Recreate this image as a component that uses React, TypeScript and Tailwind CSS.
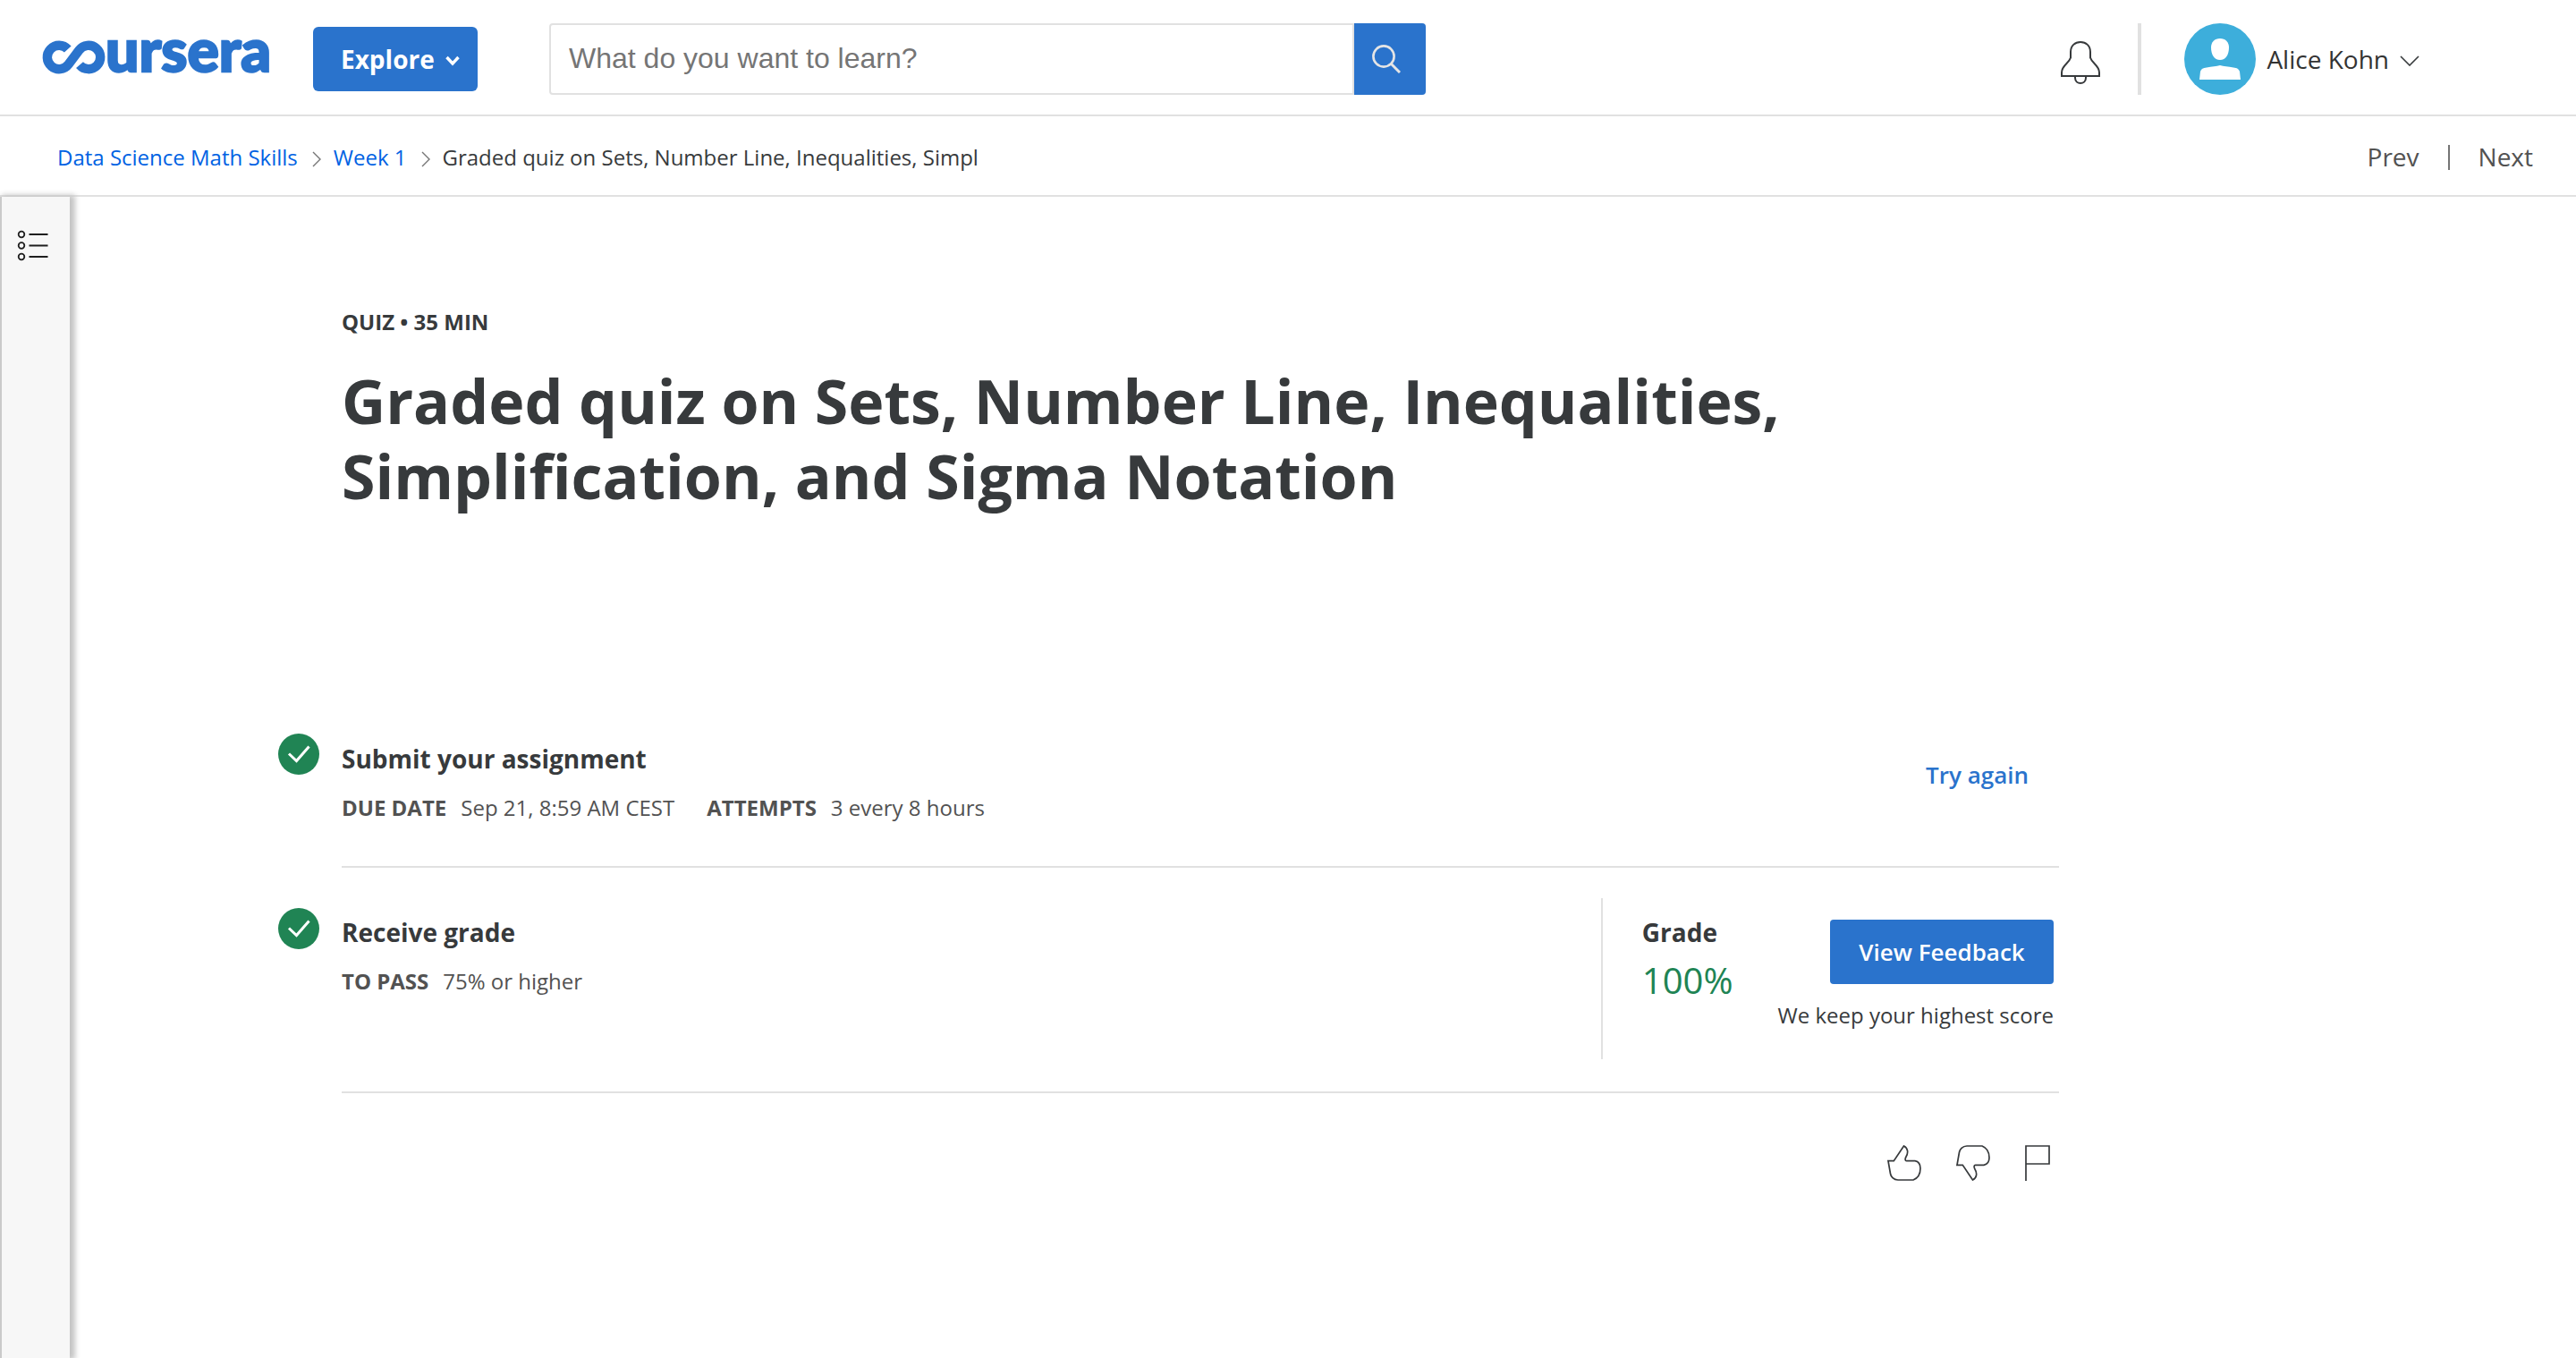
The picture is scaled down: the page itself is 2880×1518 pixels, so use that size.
import React from "react";

function Check() {
  return (
    <svg viewBox="0 0 46 46" className="h-[46px] w-[46px] shrink-0" aria-label="Completed" role="img">
      <circle cx="23" cy="23" r="23" fill="#208454" />
      <path d="M12 22.5 L20.5 30.5 L34.5 14.5" fill="none" stroke="#fff" strokeWidth="3" />
    </svg>
  );
}

function Crumb() {
  return (
    <svg viewBox="0 0 10 18" className="mt-1 mr-3.5 ml-4 h-[18px] w-2.5 shrink-0" aria-hidden="true">
      <path d="M1 1 L9 9 L1 17" fill="none" stroke="#757575" strokeWidth="1.4" />
    </svg>
  );
}

function Logo() {
  return (
    <a href="#home" aria-label="Coursera" className="ml-12 flex shrink-0 text-[#2A73CC]">
      <svg viewBox="0 -34 260 112" className="h-28 w-[260px] overflow-visible" aria-hidden="true">
        <path
          d="M27.8 11.1 A13.2 13.2 0 1 0 28.6 27.9 L40.4 12.1 A13.2 13.2 0 1 1 41 28.6"
          fill="none"
          stroke="currentColor"
          strokeWidth="10.4"
        />
        <text
          x="70"
          y="36"
          fill="currentColor"
          stroke="currentColor"
          strokeWidth="2.4"
          className="font-['Lato',sans-serif] text-[66px] font-black"
        >
          ursera
        </text>
      </svg>
    </a>
  );
}

function Header() {
  return (
    <header className="flex h-[130px] items-center border-b-2 border-[#e1e1e1] pt-1">
      <Logo />
      <button className="ml-[42px] flex h-[72px] w-[184px] shrink-0 items-center gap-3 rounded-md bg-[#2A73CC] pl-[31px] text-[28px] font-bold text-white">
        Explore
        <svg viewBox="0 0 16 12" className="mt-1 h-3 w-4" aria-hidden="true">
          <path d="M1.5 2 L8 9 L14.5 2" fill="none" stroke="#fff" strokeWidth="3.4" />
        </svg>
      </button>
      <form className="ml-20 flex h-20 w-[980px]" role="search">
        <input
          type="text"
          aria-label="Search courses"
          placeholder="What do you want to learn?"
          className="min-w-0 flex-1 rounded-l border-2 border-[#e1e1e1] px-5 pb-0.5 font-['Liberation_Sans',sans-serif] text-[32px] outline-none placeholder:text-[#757575]"
        />
        <button type="button" aria-label="Search" className="flex w-20 items-center rounded-r bg-[#2A73CC] pl-5">
          <svg viewBox="0 0 32 32" className="h-8 w-8" aria-hidden="true">
            <g fill="none" stroke="#e5e5e5" strokeWidth="2.6">
              <circle cx="13" cy="13" r="11.6" />
              <path d="M21 21 L31 31" strokeWidth="3" />
            </g>
          </svg>
        </button>
      </form>
      <button aria-label="Notifications" className="ml-auto">
        <svg viewBox="0 0 44 48" className="mt-2 h-12 w-11" aria-hidden="true">
          <path
            d="M1 39 V35 C1 27 9 25 11 18.500 V12 C11 5 16 1 22 1 C28 1 33 5 33 12 V18.500 C35 25 43 27 43 35 V39 Z M16 39 V41 C16 45 19 47 22 47 C25 47 28 45 28 41 V39"
            fill="none"
            stroke="#373a3c"
            strokeWidth="2"
          />
        </svg>
      </button>
      <div className="ml-[42px] h-20 w-1 bg-[#e1e1e1]" />
      <button className="mr-[175px] ml-12 flex items-center text-[28px] text-[#333]">
        <svg viewBox="0 0 80 80" className="mr-3 h-20 w-20" aria-hidden="true">
          <circle cx="40" cy="40" r="40" fill="#3DAEDB" />
          <path d="M40 17 C46 17 50 21 50 27 C50 35 46.500 41 40 41 C33.500 41 30 35 30 27 C30 21 34 17 40 17 Z" fill="#fff" />
          <path d="M17 63 L18 54 C19 51 21 50 25 49.500 C31 48.500 36 48 40 47 C44 48 49 48.500 55 49.500 C59 50 61 51 62 54 L63 63 Z" fill="#fff" />
        </svg>
        Alice Kohn
        <svg viewBox="0 0 22 12" className="mt-1 ml-3 h-3 w-[22px]" aria-hidden="true">
          <path d="M1 1 L11 11 L21 1" fill="none" stroke="#373a3c" strokeWidth="1.600" />
        </svg>
      </button>
    </header>
  );
}

function Breadcrumbs() {
  return (
    <div className="flex h-[90px] items-center border-b-2 border-[#e1e1e1] pt-1 pr-12 pl-16 text-2xl text-[#373a3c]">
      <nav aria-label="Breadcrumb" className="flex items-center">
        <a href="#course" className="text-[#0062e3]">Data Science Math Skills</a>
        <Crumb />
        <a href="#week" className="text-[#0062e3]">Week 1</a>
        <Crumb />
        <span>Graded quiz on Sets, Number Line, Inequalities, Simpl</span>
      </nav>
      <nav aria-label="Lesson" className="ml-auto flex items-center text-[28px] text-[#525252]">
        <a href="#prev">Prev</a>
        <span className="mx-8 h-7 w-0.5 bg-[#757575]" />
        <a href="#next">Next</a>
      </nav>
    </div>
  );
}

function Meta({ label, value }: { label: string; value: string }) {
  return (
    <div className="flex gap-4">
      <dt className="font-bold">{label}</dt>
      <dd>{value}</dd>
    </div>
  );
}

export default function App() {
  return (
    <div className="flex min-h-screen flex-col bg-white font-['Open_Sans',sans-serif] text-[#373a3c]">
      <Header />
      <Breadcrumbs />
      <div className="flex flex-1">
        <aside className="w-[78px] shrink-0 border-l-2 border-[#cacaca] bg-[#f7f7f7] pt-9 pl-4 shadow-[4px_0_6px_2px_#c4c4c4]">
          <button aria-label="Course outline" className="block">
            <svg viewBox="0 0 36 36" className="h-9 w-9" aria-hidden="true">
              <g fill="none" stroke="#1f1f1f" strokeWidth="1.800">
                <circle cx="6" cy="6" r="3.300" />
                <circle cx="6" cy="18.500" r="3.300" />
                <circle cx="6" cy="31" r="3.300" />
                <path d="M14.500 6 H35.500 M14.500 18.500 H35.500 M14.500 31 H35.500" />
              </g>
            </svg>
          </button>
        </aside>
        <main className="ml-[233px] w-full max-w-[1991px] pt-[122px]">
          <div className="pl-[71px]">
            <p className="text-2xl leading-9 font-bold">QUIZ • 35 MIN</p>
            <h1 className="mt-7 max-w-[1680px] text-[68px] leading-[84px] font-bold">
              Graded quiz on Sets, Number Line, Inequalities, Simplification, and Sigma Notation
            </h1>
          </div>

          <section className="mt-[246px] flex">
            <Check />
            <div className="ml-[25px] flex h-[150px] flex-1 items-start border-b-2 border-[#e1e1e1]">
              <div>
                <h2 className="mt-2 text-[28px] leading-10 font-bold">Submit your assignment</h2>
                <dl className="mt-[17px] flex gap-9 text-2xl leading-9 text-[#525252]">
                  <Meta label="DUE DATE" value="Sep 21, 8:59 AM CEST" />
                  <Meta label="ATTEMPTS" value="3 every 8 hours" />
                </dl>
              </div>
              <button className="mt-[26px] mr-[34px] ml-auto text-[26px] leading-10 font-semibold text-[#2A73CC]">
                Try again
              </button>
            </div>
          </section>

          <section className="flex">
            <div className="pt-[45px]">
              <Check />
            </div>
            <div className="ml-[25px] flex flex-1 items-start border-b-2 border-[#e1e1e1] pt-[34px] pb-9">
              <div>
                <h2 className="mt-[18px] text-[28px] leading-10 font-bold">Receive grade</h2>
                <dl className="mt-[17px] flex text-2xl leading-9 text-[#525252]">
                  <Meta label="TO PASS" value="75% or higher" />
                </dl>
              </div>
              <div className="ml-auto flex h-[180px] items-start border-l-2 border-[#e1e1e1] pr-1.5 pl-11">
                <div>
                  <h2 className="mt-[18px] text-[28px] leading-10 font-bold">Grade</h2>
                  <p className="mt-2 text-[40px] leading-[52px] text-[#208454]">100%</p>
                </div>
                <div className="mt-6 ml-[50px] flex flex-col items-end">
                  <button className="h-[72px] w-[250px] rounded bg-[#2A73CC] text-[26px] font-semibold text-white">
                    View Feedback
                  </button>
                  <p className="mt-[17px] text-2xl leading-9">We keep your highest score</p>
                </div>
              </div>
            </div>
          </section>

          <div className="mt-[58px] flex justify-end gap-[39px] pr-2.5">
            <button aria-label="Like">
              <svg viewBox="0 0 38 40" className="h-10 w-[38px]" aria-hidden="true">
                <path
                  d="M1 17.700 H7.300 L18.500 1 C23.500 3.500 23.500 9 21 13 C19.500 16 20 17.700 21.500 17.700 H31 C35 18.500 37 22 37 26 C37 32 34 37 29 39 H12 C7 39 4 35 3.500 32 Z"
                  fill="none"
                  stroke="#373a3c"
                  strokeWidth="1.700"
                />
              </svg>
            </button>
            <button aria-label="Dislike">
              <svg viewBox="0 0 38 40" className="h-10 w-[38px]" aria-hidden="true">
                <path
                  d="M1 22.300 H7.300 L18.500 39 C23.500 36.500 23.500 31 21 27 C19.500 24 20 22.300 21.500 22.300 H31 C35 21.500 37 18 37 14 C37 8 34 3 29 1 H12 C7 1 4 5 3.500 8 Z"
                  fill="none"
                  stroke="#373a3c"
                  strokeWidth="1.700"
                />
              </svg>
            </button>
            <button aria-label="Report">
              <svg viewBox="0 0 28 40" className="h-10 w-7" aria-hidden="true">
                <path d="M1 40 V1 H27 V21 H1" fill="none" stroke="#373a3c" strokeWidth="1.700" />
              </svg>
            </button>
          </div>
        </main>
      </div>
    </div>
  );
}
